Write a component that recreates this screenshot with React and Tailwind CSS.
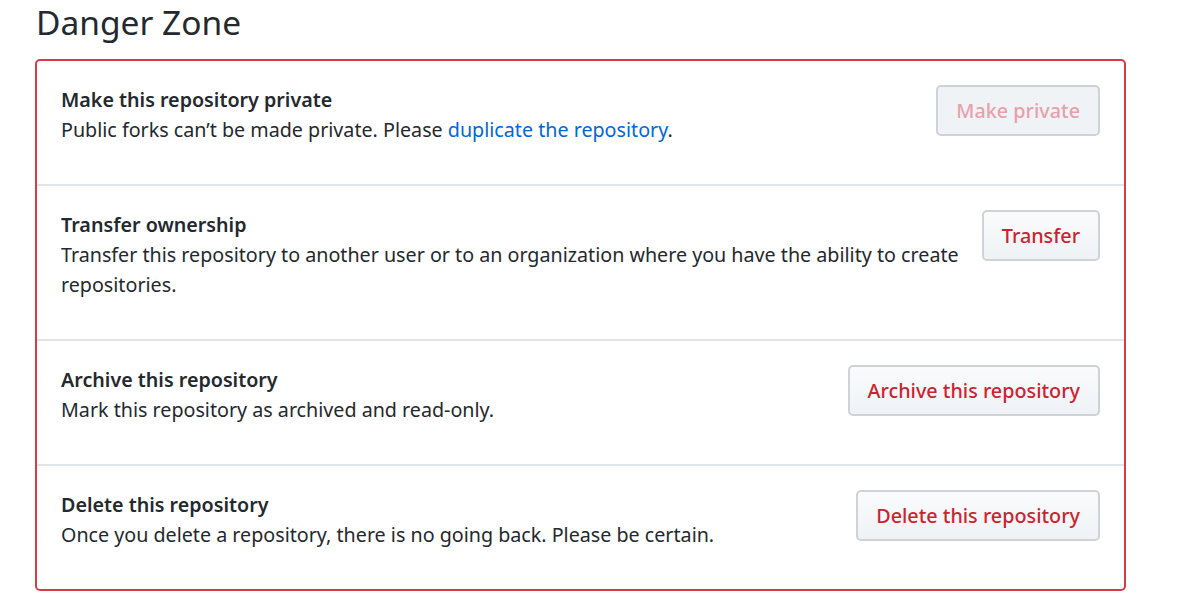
const rows = [
  {
    title: 'Make this repository private',
    body: (
      <>
        Public forks can’t be made private. Please{' '}
        <a className="text-[#0366d6]">duplicate the repository</a>.
      </>
    ),
    button: 'Make private',
    disabled: true,
  },
  {
    title: 'Transfer ownership',
    body: 'Transfer this repository to another user or to an organization where you have the ability to create repositories.',
    button: 'Transfer',
  },
  {
    title: 'Archive this repository',
    body: 'Mark this repository as archived and read-only.',
    button: 'Archive this repository',
  },
  {
    title: 'Delete this repository',
    body: 'Once you delete a repository, there is no going back. Please be certain.',
    button: 'Delete this repository',
  },
];

function DangerRow({ row, last }) {
  return (
    <div className={`flex items-start px-[24px] pt-[24px] pb-[24px] ${last ? '' : 'border-b-2 border-[#e1e4e8]'}`}>
      <div className="flex-auto">
        <p className="font-semibold text-[19.7px] leading-[30px]">{row.title}</p>
        <p className="text-[19.7px] leading-[30px] mb-[15px]">{row.body}</p>
      </div>
      <button
        className={`ml-[14px] shrink-0 h-[51px] px-[18px] rounded-[5px] border-2 border-[#cfd3d7] bg-gradient-to-b from-[#fafbfc] to-[#eff3f6] text-[19.8px] font-medium ${
          row.disabled ? 'bg-none bg-[#eff3f6] text-[#e8a0aa]' : 'text-[#cb2431]'
        }`}
      >
        {row.button}
      </button>
    </div>
  );
}

export default function App() {
  return (
    <div className="min-h-screen bg-white text-[#24292e] font-['Noto_Sans',sans-serif] pl-[35px]">
      <h1 className="text-[33.5px] leading-[44px] font-normal pl-px pt-0 mb-[15px]">Danger Zone</h1>
      <div className="w-[1091px] border-2 border-[#d73a49] rounded-[5px]">
        {rows.map((row, i) => (
          <DangerRow key={row.title} row={row} last={i === rows.length - 1} />
        ))}
      </div>
    </div>
  );
}
